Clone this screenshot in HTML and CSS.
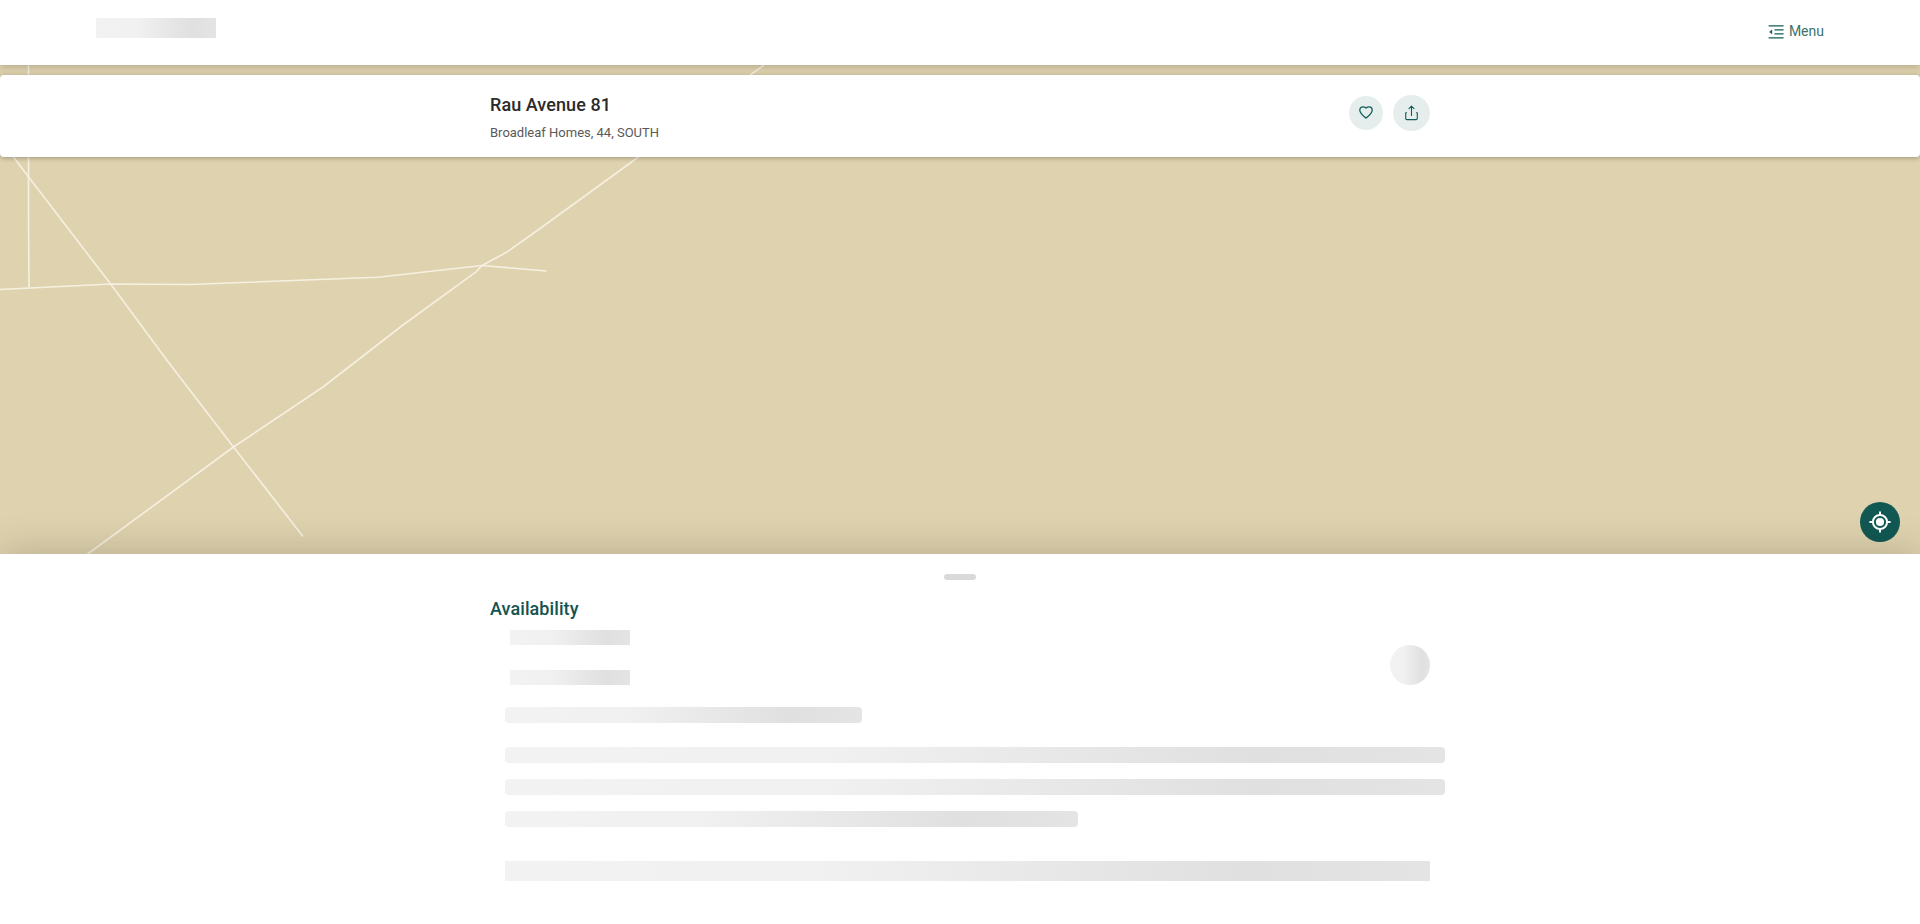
FILE: index.html
```html
<!DOCTYPE html>
<html lang="en">
<head>
<meta charset="utf-8">
<title>Rau Avenue 81</title>
<link rel="stylesheet" href="styles.css">
</head>
<body>
<div class="page">
  <header class="header">
    <div class="skeleton logo"></div>
    <a class="menu">
      <svg class="menu-icon" width="16" height="14" viewBox="0 0 16 14"><path d="M.6 .8h15M6.500 4.800h9.100M6.500 8.900h9.100M.6 12.800h15" fill="none" stroke="currentColor" stroke-width="1.200"/><path d="M4.100 4.600v4.600L1.200 6.900z" fill="currentColor"/></svg>
      <span>Menu</span>
    </a>
  </header>
  <main class="map">
    <svg class="roads" width="1920" height="489" viewBox="0 65 1920 489">
      <path d="M28.500 65V214L29 287"/>
      <path d="M-19 108L13.500 157L28.600 177L111 284.500L167.300 360.700L233.500 447L303 536.500"/>
      <path d="M0 289.500L111 284L190 284.500L378 277.300L482 265.500L546.500 271"/>
      <path d="M87 554.500L233.500 447L323 387L403 325L476 271.800L482 265.500L507 252L538 230L638.500 157L764 65"/>
    </svg>
    <section class="place">
      <div class="container place-row">
        <div>
          <h1 class="title">Rau Avenue 81</h1>
          <p class="address">Broadleaf Homes, 44, SOUTH</p>
        </div>
        <div class="actions">
          <button class="action like" aria-label="Save"><svg width="14" height="13" viewBox="0 0 14 13"><path d="M7 12C5.300 10.400 .8 7.600 .8 4.200C.8 2.200 2.200 .9 3.900 .9C5.200 .9 6.200 1.400 7 2.100C7.800 1.400 8.800 .9 10.100 .9C11.800 .9 13.200 2.200 13.200 4.200C13.200 7.600 8.700 10.400 7 12Z"/></svg></button>
          <button class="action share" aria-label="Share"><svg width="13" height="16" viewBox="0 0 13 16"><path d="M6.500 10.500V1.300M4 3.700L6.500 1.200L9 3.700M1.600 7.800H.7V13.300Q.7 14.600 2 14.600H11Q12.300 14.600 12.300 13.300V7.800H11.400"/></svg></button>
        </div>
      </div>
    </section>
    <button class="locate" aria-label="My location"><svg width="22" height="22" viewBox="0 0 22 22"><circle cx="11" cy="11" r="4.100" fill="#fff"/><circle cx="11" cy="11" r="7.100" fill="none" stroke="#fff" stroke-width="2"/><path d="M11 .4V4M11 18V21.600M.4 11H4M18 11H21.600" stroke="#fff" stroke-width="2"/></svg></button>
  </main>
  <section class="sheet">
    <div class="handle"></div>
    <div class="container">
      <h2 class="heading">Availability</h2>
      <div class="summary">
        <div class="summary-lines">
          <div class="skeleton line-short"></div>
          <div class="skeleton line-short"></div>
        </div>
        <div class="skeleton avatar"></div>
      </div>
      <div class="paragraph">
        <div class="skeleton bar bar-title"></div>
        <div class="skeleton bar"></div>
        <div class="skeleton bar"></div>
        <div class="skeleton bar bar-last"></div>
      </div>
      <div class="skeleton block"></div>
    </div>
  </section>
</div>
</body>
</html>
```
FILE: styles.css
```css
* { box-sizing: border-box; }
body { margin: 0; font-family: Roboto, sans-serif; background: #fff; }
h1, h2, p { margin: 0; }
button { border: 0; padding: 0; }
svg { display: block; }
.page { height: 924px; overflow: hidden; display: flex; flex-direction: column; }
.container { width: 940px; margin: 0 auto; }
.skeleton { background: linear-gradient(90deg, #f2f2f2 0%, #f1f1f1 33%, #e0e0e0 80%, #e4e4e4 100%); }

.header { position: relative; z-index: 2; flex: none; height: 65px; padding: 18px 96px 0; display: flex; justify-content: space-between; align-items: flex-start; background: #fff; box-shadow: 0 2px 8px rgba(0, 0, 0, .2); }
.logo { width: 120px; height: 20px; }
.menu { display: flex; align-items: center; gap: 5px; height: 26px; color: #115e59; font-size: 14px; line-height: 20px; }
.menu-icon { margin-top: 2px; }
.menu span { color: #3c736d; margin-top: -1px; }

.map { position: relative; flex: none; height: 489px; padding-top: 10px; background: #dfd2ae; }
.roads { position: absolute; top: 0; left: 0; fill: none; stroke: #f6f0e2; stroke-width: 1.6; stroke-linejoin: round; }
.place { position: relative; height: 82px; background: #fff; border-radius: 4px; box-shadow: 0 1px 5px rgba(0, 0, 0, .3); }
.place-row { display: flex; justify-content: space-between; }
.title { margin-top: 19px; font-size: 18px; line-height: 22px; font-weight: 550; letter-spacing: .07px; color: #2b2b2b; }
.address { margin-top: 8px; font-size: 13px; line-height: 18px; color: #595959; }
.actions { display: flex; align-items: center; gap: 10px; height: 37px; margin-top: 19px; }
.action { display: flex; align-items: center; justify-content: center; border-radius: 50%; background: #e6eeed; }
.action svg { fill: none; stroke: #115e59; stroke-width: 1.3; stroke-linecap: round; stroke-linejoin: round; }
.like { width: 34px; height: 34px; }
.share { width: 37px; height: 36px; }
.share svg { stroke-width: 1.1; }
.locate { position: absolute; right: 20px; bottom: 12px; width: 40px; height: 40px; display: flex; align-items: center; justify-content: center; border-radius: 50%; background: #125853; }

.sheet { position: relative; flex: 1; padding-top: 20px; background: #fff; box-shadow: 0 0 40px rgba(0, 0, 0, .2); }
.handle { width: 32px; height: 6px; margin: 0 auto; border-radius: 3px; background: #d9d9d9; }
.heading { margin-top: 17px; font-size: 18px; line-height: 24px; font-weight: 550; letter-spacing: .08px; color: #14534f; }
.summary { display: flex; justify-content: space-between; align-items: flex-start; height: 55px; margin-top: 9px; }
.summary-lines { display: flex; flex-direction: column; gap: 25px; padding-left: 20px; }
.line-short { width: 120px; height: 15px; }
.avatar { width: 40px; height: 40px; margin-top: 15px; border-radius: 50%; }
.paragraph { display: flex; flex-direction: column; gap: 16px; width: 940px; margin: 22px 0 0 15px; }
.bar { height: 16px; border-radius: 4px; }
.bar-title { width: 357px; margin-bottom: 8px; }
.bar-last { width: 573px; }
.block { height: 20px; margin: 34px 0 0 15px; }
```
